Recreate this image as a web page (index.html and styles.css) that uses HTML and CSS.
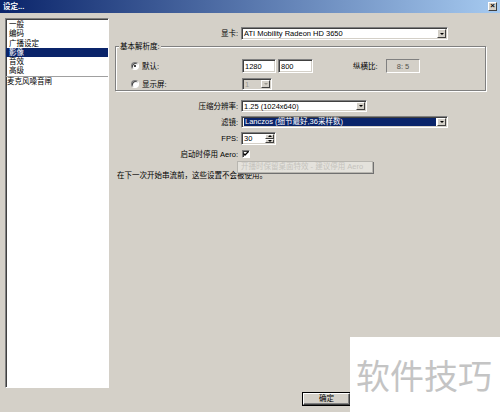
FILE: index.html
```html
<!DOCTYPE html>
<html lang="zh-CN">
  <head>
    <meta charset="UTF-8" />
    <title>设定...</title>
    <link rel="stylesheet" href="styles.css">
  </head>
  <body>
    <div class="window">
      <div class="titlebar">
        <span class="title">设定...</span>
        <span class="close">×</span>
      </div>
      <div class="main">
        <ul class="nav">
          <li>一般</li>
          <li>编码</li>
          <li>广播设定</li>
          <li class="active">影像</li>
          <li>音效</li>
          <li>高级</li>
          <li class="sep">麦克风噪音闸</li>
        </ul>

        <div class="panel">
          <div class="row gpu-row">
            <span class="lbl">显卡:</span>
            <div class="combo w-gpu">
              <span class="value">ATI Mobility Radeon HD 3650</span>
              <span class="drop"><i></i></span>
            </div>
          </div>

          <div class="group">
            <span class="legend">基本解析度:</span>
            <div class="grow first">
              <label class="opt"><span class="radio on"></span>默认:</label>
              <div class="field w-num">1280</div>
              <div class="field w-num2">800</div>
              <span class="ratio-lbl">纵横比:</span>
              <div class="ratio">8: 5</div>
            </div>
            <div class="grow second">
              <label class="opt"><span class="radio"></span>显示屏:</label>
              <div class="combo disabled w-mon">
                <span class="value">1</span>
                <span class="drop"><i></i></span>
              </div>
            </div>
          </div>

          <div class="row scale-row">
            <span class="lbl">压缩分辨率:</span>
            <div class="combo w-scale">
              <span class="value">1.25 (1024x640)</span>
              <span class="drop"><i></i></span>
            </div>
          </div>

          <div class="row filter-row">
            <span class="lbl">滤镜:</span>
            <div class="combo w-gpu selected">
              <span class="value">Lanczos (细节最好,36采样数)</span>
              <span class="drop"><i></i></span>
            </div>
          </div>

          <div class="row fps-row">
            <span class="lbl">FPS:</span>
            <div class="spin">
              <span class="value">30</span>
              <span class="arrows">
                <span class="up"><i></i></span>
                <span class="down"><i></i></span>
              </span>
            </div>
          </div>

          <div class="row aero-row">
            <span class="lbl">启动时停用 Aero:</span>
            <span class="check">
              <svg width="6" height="6" viewBox="0 0 6 6"><path d="M0.5 2.5 L2 4 L5.5 0.5" fill="none" stroke="#000" stroke-width="1.3"/></svg>
            </span>
          </div>

          <p class="note">在下一次开始串流前，这些设置不会被使用。</p>

          <div class="tooltip">开播时保留桌面特效 - 建议停用 Aero</div>

          <div class="footer">
            <button class="btn">确定</button>
          </div>
        </div>
      </div>

      <div class="watermark">软件技巧</div>
    </div>
  </body>
</html>
```

FILE: styles.css
```css
body {
  margin: 0;
  font-family: 'Liberation Sans', 'Noto Sans CJK SC', sans-serif;
  font-size: 7.5px;
  line-height: 9px;
  color: #000;
  background-color: #d4d0c8;
}
.window {
  position: relative;
  width: 500px;
  height: 412px;
  background-color: #d4d0c8;
  display: flex;
  flex-direction: column;
  overflow: hidden;
}
.titlebar {
  height: 13px;
  padding: 0 3px;
  display: flex;
  align-items: center;
  justify-content: space-between;
  background: linear-gradient(to right, #0a246a, #a6caf0);
  color: #fff;
  font-weight: bold;
}
.close {
  width: 9px;
  height: 9px;
  box-sizing: border-box;
  background-color: #d4d0c8;
  border: 1px solid;
  border-color: #fff #404040 #404040 #fff;
  color: #000;
  font-size: 8px;
  line-height: 6px;
  text-align: center;
}
.main {
  flex: 1;
  display: flex;
}
.nav {
  list-style: none;
  margin: 5px 0 0 5px;
  padding: 1px 0 0;
  width: 104px;
  height: 370px;
  box-sizing: border-box;
  background-color: #fff;
  border: 1px solid;
  border-color: #808080 #fff #fff #808080;
  box-shadow: inset 1px 1px 0 #404040;
}
.nav li {
  height: 9.3px;
  line-height: 9.3px;
  padding-left: 3px;
}
.nav li.active {
  background-color: #0a246a;
  color: #fff;
}
.nav li.sep {
  border-top: 1px solid #a0a0a0;
  padding-left: 1px;
}
.panel {
  position: relative;
  flex: 1;
  display: flex;
  flex-direction: column;
}
.row {
  display: flex;
  align-items: center;
}
.lbl {
  width: 132px;
  padding-right: 3px;
  box-sizing: border-box;
  text-align: right;
}
.gpu-row {
  margin-top: 14px;
  height: 13px;
}
.scale-row {
  margin-top: 9px;
  height: 12px;
}
.filter-row {
  margin-top: 4px;
  height: 12px;
}
.fps-row {
  margin-top: 4px;
  height: 13px;
}
.aero-row {
  margin-top: 4px;
  height: 10px;
}

/* sunken edit boxes / combos */
.combo,
.field,
.spin,
.ratio {
  box-sizing: border-box;
  height: 100%;
  background-color: #fff;
  border: 1px solid;
  border-color: #808080 #fff #fff #808080;
  box-shadow: inset 1px 1px 0 #404040, inset -1px -1px 0 #d4d0c8;
  display: flex;
  align-items: center;
}
.combo .value,
.spin .value,
.field {
  flex: 1;
  padding-left: 2px;
  white-space: nowrap;
  overflow: hidden;
}
.drop {
  width: 9px;
  height: calc(100% - 2px);
  margin-right: 1px;
  box-sizing: border-box;
  background-color: #d4d0c8;
  border: 1px solid;
  border-color: #fff #404040 #404040 #fff;
  display: flex;
  align-items: center;
  justify-content: center;
}
.drop i,
.arrows i {
  width: 0;
  height: 0;
  border-left: 2px solid transparent;
  border-right: 2px solid transparent;
  border-top: 2px solid #000;
}
.w-gpu {
  width: 207px;
}
.w-scale {
  width: 126px;
}
.selected .value {
  align-self: stretch;
  margin: 1px 1px 1px 2px;
  padding-left: 1px;
  background-color: #0a246a;
  color: #fff;
  line-height: 8px;
  overflow: visible;
}
.disabled {
  background-color: #d4d0c8;
}
.disabled .value {
  color: #9a9890;
}
.disabled .drop i {
  border-top-color: #9a9890;
}

/* group box */
.group {
  margin: 6px 0 0 6px;
  width: 371px;
  height: 45px;
  box-sizing: border-box;
  border: 1px solid #808080;
  box-shadow: 1px 1px 0 #fff, inset 1px 1px 0 #fff;
}
.legend {
  display: inline-block;
  margin: -5px 0 0 3px;
  padding: 0 1px;
  background-color: #d4d0c8;
  vertical-align: top;
}
.grow {
  display: flex;
  align-items: center;
}
.grow.first {
  margin-top: 3px;
  height: 14px;
}
.grow.second {
  margin-top: 5px;
  height: 12px;
}
.opt {
  width: 126px;
  padding-left: 15px;
  box-sizing: border-box;
  display: flex;
  align-items: center;
}
.radio {
  width: 8px;
  height: 8px;
  margin-right: 3px;
  box-sizing: border-box;
  border-radius: 50%;
  background-color: #fff;
  border: 1px solid;
  border-color: #808080 #fff #fff #808080;
  box-shadow: inset 1px 1px 0 #404040;
  display: flex;
  align-items: center;
  justify-content: center;
}
.radio.on::after {
  content: '';
  width: 2px;
  height: 2px;
  border-radius: 50%;
  background-color: #000;
}
.w-num {
  width: 34px;
  flex: none;
}
.w-num2 {
  width: 35px;
  flex: none;
  margin-left: 2px;
}
.ratio-lbl {
  margin-left: 40px;
  width: 33px;
}
.ratio {
  width: 34px;
  height: 14px;
  background-color: #d4d0c8;
  justify-content: center;
  color: #55534d;
  box-shadow: none;
}
.w-mon {
  width: 30px;
}

/* spinner */
.spin {
  width: 35px;
}
.arrows {
  width: 9px;
  height: calc(100% - 2px);
  margin-right: 1px;
  display: flex;
  flex-direction: column;
}
.arrows span {
  flex: 1;
  box-sizing: border-box;
  background-color: #d4d0c8;
  border: 1px solid;
  border-color: #fff #404040 #404040 #fff;
  display: flex;
  align-items: center;
  justify-content: center;
}
.arrows .up i {
  border-top: none;
  border-bottom: 2px solid #000;
}

/* checkbox */
.check {
  width: 8px;
  height: 8px;
  margin-left: 1px;
  box-sizing: border-box;
  background-color: #fff;
  border: 1px solid;
  border-color: #808080 #fff #fff #808080;
  box-shadow: inset 1px 1px 0 #404040;
  display: flex;
  align-items: center;
  justify-content: center;
}
.check svg {
  display: block;
}
.note {
  margin: 12px 0 0 8px;
}
.tooltip {
  position: absolute;
  left: 128px;
  top: 148px;
  width: 136px;
  height: 12px;
  box-sizing: border-box;
  padding-left: 3px;
  background-color: #e4e2dc;
  border: 1px solid #b8b6b0;
  box-shadow: 1px 1px 0 #707070;
  color: #c4c2bc;
  white-space: nowrap;
  line-height: 10px;
}
.footer {
  margin-top: auto;
  padding: 0 0 7px 194px;
  display: flex;
}
.btn {
  width: 47px;
  height: 12px;
  padding: 0;
  font: inherit;
  line-height: 8px;
  background-color: #d4d0c8;
  border: 1px solid;
  border-color: #fff #404040 #404040 #fff;
  box-shadow: inset -1px -1px 0 #808080, 0 0 0 1px #000;
}
.watermark {
  position: absolute;
  left: 350px;
  top: 337px;
  width: 150px;
  height: 75px;
  background-color: #fff;
  color: #c4c4c4;
  font-family: 'Noto Sans CJK SC', sans-serif;
  font-size: 34px;
  line-height: 75px;
  padding-left: 6px;
  box-sizing: border-box;
  white-space: nowrap;
}
```
